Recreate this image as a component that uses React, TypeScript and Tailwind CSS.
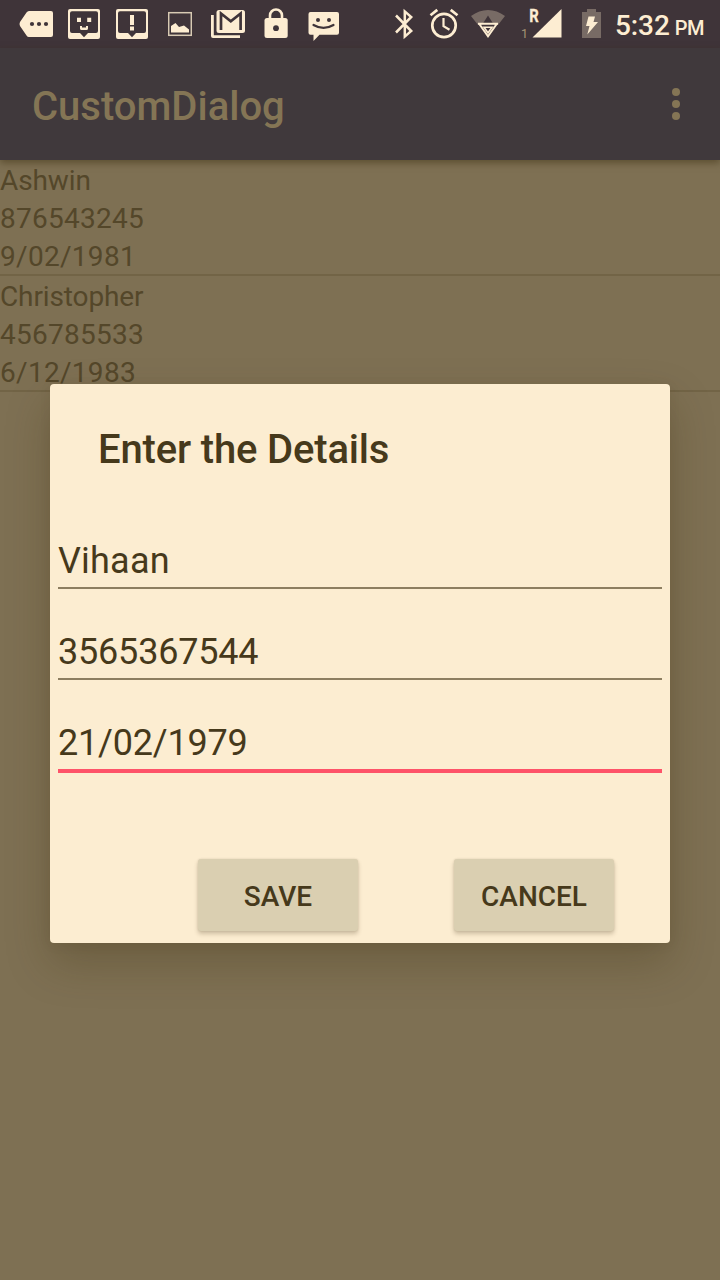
import React from "react";

const CREAM = "#fdedd2";
const BAR = "#3f3439";

function MoreTagIcon() {
  return (
    <svg className="ml-[19px] shrink-0" width="35" height="48" viewBox="19 0 35 48">
      <path fill={CREAM} d="M29 11H51a2 2 0 0 1 2 2V35a2 2 0 0 1-2 2H29q-1.500 0-2.500-1.500L20 26q-1-2 0-4l6.500-9.500Q27.500 11 29 11Z" />
      <circle cx="32" cy="24" r="2.100" fill={BAR} />
      <circle cx="39" cy="24" r="2.100" fill={BAR} />
      <circle cx="46" cy="24" r="2.100" fill={BAR} />
    </svg>
  );
}

function BubbleFrame({ children, className }: { children: React.ReactNode; className: string }) {
  return (
    <svg className={className} width="32" height="48" viewBox="0 0 32 48">
      <rect x="0" y="9" width="32" height="30" rx="2" fill={CREAM} />
      <path fill={BAR} d="M4 11.300H28a2 2 0 0 1 2 2V31a2 2 0 0 1-2 2H20L16 37.200 12 33H4a2 2 0 0 1-2-2V13.300a2 2 0 0 1 2-2Z" />
      {children}
    </svg>
  );
}

function PictureIcon() {
  return (
    <svg className="ml-5 shrink-0" width="24" height="48" viewBox="168 0 24 48">
      <rect x="168.700" y="12.700" width="22.600" height="22.600" fill="none" stroke="#d8cab3" strokeWidth="1.500" />
      <path fill={CREAM} d="M171 32.500V26L175.500 23 179 27l5-1.500 5 4V32.500Z" />
    </svg>
  );
}

function GmailIcon() {
  return (
    <svg className="ml-[19px] shrink-0" width="34" height="48" viewBox="211 0 34 48">
      <path fill={CREAM} d="M211 15h2.800V35.200H240V38H213a2 2 0 0 1-2-2Z" />
      <rect x="216.500" y="10" width="28.500" height="23" rx="2.500" fill={CREAM} />
      <path fill="none" stroke={BAR} strokeWidth="2.700" d="M221 30V13.500L230.800 21.300 240.600 13.500V30" />
    </svg>
  );
}

function LockIcon() {
  return (
    <svg className="ml-[19px] shrink-0" width="24" height="48" viewBox="264 0 24 48">
      <path fill="none" stroke={CREAM} strokeWidth="2.600" d="M270 19V15.500a6 6 0 0 1 12 0V19" />
      <rect x="264.500" y="18" width="23.200" height="20" rx="2.500" fill={CREAM} />
      <circle cx="276" cy="28.200" r="2.900" fill={BAR} />
    </svg>
  );
}

function SmileMessageIcon() {
  return (
    <svg className="ml-5 shrink-0" width="32" height="48" viewBox="308 0 32 48">
      <path fill={CREAM} d="M310.500 12H337a2 2 0 0 1 2 2V32.800a2 2 0 0 1-2 2H319.500L313.500 41V34.800H310.500a2 2 0 0 1-2-2V14a2 2 0 0 1 2-2Z" />
      <circle cx="318" cy="20" r="2" fill={BAR} />
      <circle cx="329" cy="20" r="2" fill={BAR} />
      <path fill="none" stroke={BAR} strokeWidth="2.200" strokeLinecap="round" d="M313.500 25Q323.500 30.800 333.500 25" />
    </svg>
  );
}

function BluetoothIcon() {
  return (
    <svg className="ml-auto shrink-0" width="20" height="48" viewBox="395 0 20 48">
      <path fill="none" stroke={CREAM} strokeWidth="2.500" d="M396 15.500 411.200 31 404.800 36.600V11.400L411.200 17 396 32.500" />
    </svg>
  );
}

function AlarmIcon() {
  return (
    <svg className="ml-[14px] shrink-0" width="30" height="48" viewBox="429 0 30 48">
      <g fill="none" stroke={CREAM} strokeWidth="2.700">
        <circle cx="444" cy="25.500" r="11.700" />
        <path d="M430.500 15.300 437.300 9.900M457.500 15.300 450.700 9.900" />
        <path strokeWidth="2.200" d="M443.500 18V26.200L449.500 29.800" />
      </g>
    </svg>
  );
}

function WifiIcon() {
  return (
    <svg className="ml-[11px] shrink-0" width="36" height="48" viewBox="470 0 36 48">
      <path fill="#786b65" d="M471 16Q479 10 488 10T505 16L498 25H494L488 15.500 482 25H478Z" />
      <path fill="none" stroke={CREAM} strokeWidth="2" d="M478 23.700H498M479.300 24 488 36.300 496.700 24" />
      <path fill="none" stroke={CREAM} strokeWidth="1.600" d="M484 27.300H492L488 32.800Z" />
    </svg>
  );
}

function SignalIcon() {
  return (
    <svg className="ml-[14px] shrink-0" width="42" height="48" viewBox="520 0 42 48">
      <text x="529.300" y="21.700" fill={CREAM} stroke={CREAM} strokeWidth=".3" fontSize="17.500" fontWeight="700" textLength="9.500" lengthAdjust="spacingAndGlyphs">R</text>
      <text x="521" y="38" fill="#a39375" fontSize="12.500">1</text>
      <path fill={CREAM} d="M532.500 37.500 561.500 9V37.500Z" />
    </svg>
  );
}

function BatteryIcon() {
  return (
    <svg className="ml-5 shrink-0" width="20" height="48" viewBox="582 0 20 48">
      <path fill="#786b65" d="M582 12h5V9h9v3h5V38H582Z" />
      <path fill={CREAM} d="M588.500 16.500H595L593.500 22H598L587.300 34.500 589.500 26H586Z" />
    </svg>
  );
}

function StatusBar() {
  return (
    <header className="flex h-12 items-center bg-[#3f3439] text-[#fdedd2]">
      <MoreTagIcon />
      <BubbleFrame className="ml-[14px] shrink-0">
        <path fill={CREAM} d="M9 17.700h4v4.300H9zM19.200 17.700h4v4.300h-4zM12 26h2v1.600h4V26h2v2.400q0 1.600-1.600 1.600h-4.800Q12 30 12 28.400Z" />
      </BubbleFrame>
      <BubbleFrame className="ml-4 shrink-0">
        <path fill={CREAM} d="M14 15h4v10h-4zM14 26.500h4v4h-4z" />
      </BubbleFrame>
      <PictureIcon />
      <GmailIcon />
      <LockIcon />
      <SmileMessageIcon />
      <BluetoothIcon />
      <AlarmIcon />
      <WifiIcon />
      <SignalIcon />
      <BatteryIcon />
      <div className="ml-[13px] flex w-[105px] shrink-0 items-baseline gap-[5px] pt-[5px] font-medium">
        <span className="text-[28px] leading-8 tracking-[-0.1px]">5:32</span>
        <span className="text-[20px] leading-8 tracking-[-0.4px]">PM</span>
      </div>
    </header>
  );
}

const contacts = [
  ["Ashwin", "876543245", "9/02/1981"],
  ["Christopher", "456785533", "6/12/1983"],
];

const fields = [
  { value: "Vihaan", active: false },
  { value: "3565367544", active: false },
  { value: "21/02/1979", active: true },
];

function DialogButton({ label }: { label: string }) {
  return (
    <button className="h-[72px] w-40 rounded-[3px] bg-[#dacfb1] pt-1 text-[28px] font-medium text-[#46391b] shadow-[0_3px_4px_rgba(70,57,27,0.25),0_0_2px_rgba(70,57,27,0.15)]">
      {label}
    </button>
  );
}

function DetailsDialog() {
  return (
    <section className="absolute left-[50px] top-[384px] flex h-[559px] w-[620px] flex-col rounded-[4px] bg-[#fcedd1] px-2 text-[#46391b] shadow-[0_20px_44px_rgba(60,45,15,0.28),0_2px_12px_rgba(60,45,15,0.08)]">
      <h2 className="h-[120px] pl-10 pt-[42px] text-[40px] font-medium leading-[48px] tracking-[-0.16px]">Enter the Details</h2>
      {fields.map((field) => (
        <div key={field.value} className="h-[91px] pt-[35px]">
          <div className={field.value === "Vihaan" ? "h-[48px] pt-[1px] text-[36px] leading-[42px] tracking-[0.2px]" : "h-[48px] pt-[1px] text-[36px] leading-[42px] tracking-[-0.2px]"}>
            {field.value}
          </div>
          <div className={field.active ? "h-1 bg-[#fe5369]" : "h-[2px] bg-[#8d7e60]"} />
        </div>
      ))}
      <div className="mt-[82px] flex gap-24 pl-[140px]">
        <DialogButton label="SAVE" />
        <DialogButton label="CANCEL" />
      </div>
    </section>
  );
}

export default function App() {
  return (
    <div className="relative h-[1280px] w-[720px] overflow-hidden bg-[#7e7053] font-['Roboto',sans-serif]">
      <StatusBar />
      <div className="flex h-28 items-center justify-between bg-[#40393c] pl-8 pr-10 text-[#847555] shadow-[0_3px_7px_rgba(60,45,15,0.5)]">
        <h1 className="pt-[6px] text-[40px] font-medium leading-[48px]">CustomDialog</h1>
        <div className="flex flex-col gap-1">
          <span className="h-2 w-2 rounded-full bg-[#847555]" />
          <span className="h-2 w-2 rounded-full bg-[#847555]" />
          <span className="h-2 w-2 rounded-full bg-[#847555]" />
        </div>
      </div>
      <main>
        {contacts.map(([name, phone, date]) => (
          <div key={name} className="h-[116px] border-b-2 border-[#726446] pt-[2px] text-[28px] leading-[38px] text-[#54472a]">
            <div className="tracking-[-0.12px]">{name}</div>
            <div className="tracking-[0.25px]">{phone}</div>
            <div className="h-9 tracking-[0.3px]">{date}</div>
          </div>
        ))}
      </main>
      <DetailsDialog />
    </div>
  );
}
